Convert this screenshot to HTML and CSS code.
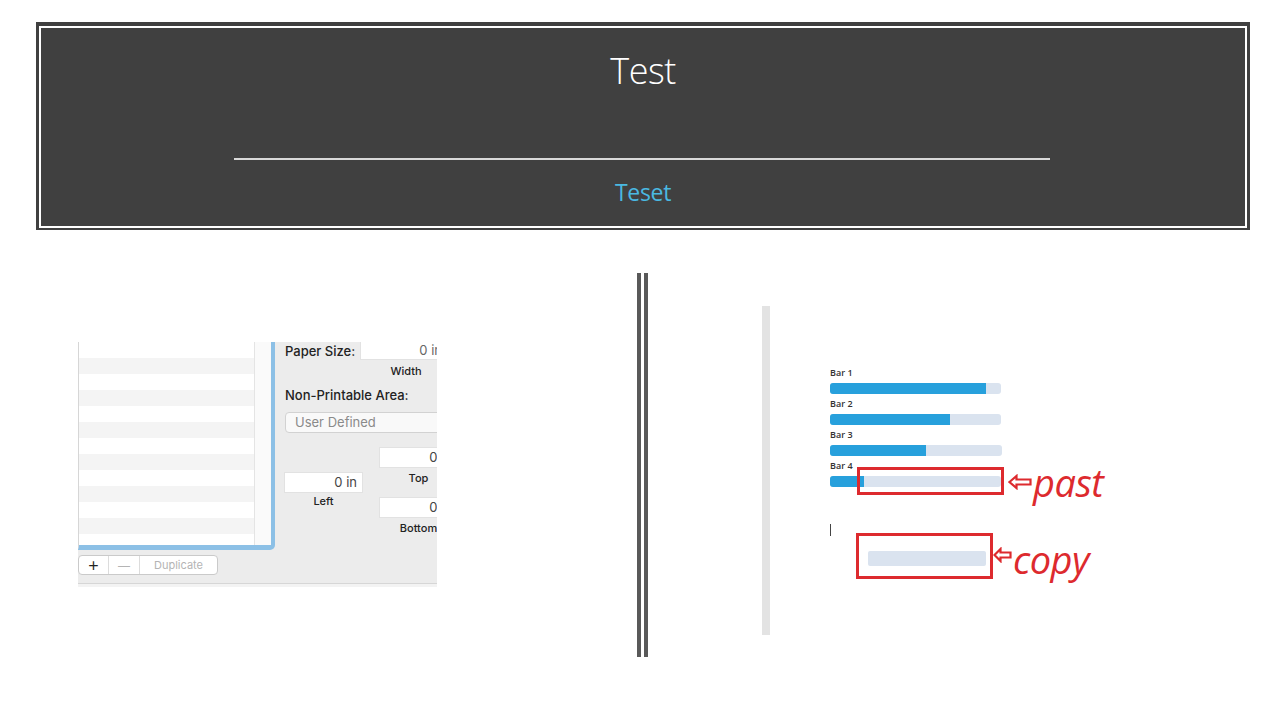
FILE: index.html
```html
<!DOCTYPE html>
<html>
<head>
<meta charset="utf-8">
<link rel="stylesheet" href="styles.css">
</head>
<body>
<header class="banner">
  <div class="frame">
    <h1 class="title">Test</h1>
    <div class="rule"></div>
    <div class="subtitle">Teset</div>
  </div>
</header>

<main class="content">
  <section class="mac">
    <div class="mac-top">
      <div class="list">
        <div class="rows"></div>
        <div class="scroll"></div>
      </div>
      <div class="form">
        <div class="paper">
          <span class="lbl paper-lbl">Paper Size:</span>
          <div class="fieldcol">
            <div class="field paper-field">0 in</div>
            <span class="cap cap-width">Width</span>
          </div>
        </div>
        <div class="lbl npa">Non-Printable Area:</div>
        <div class="popup">User Defined</div>
        <div class="margins">
          <div class="mcol mcol-left">
            <div class="field">0 in</div>
            <span class="cap">Left</span>
          </div>
          <div class="mcol">
            <div class="field">0 in</div>
            <span class="cap">Top</span>
            <div class="field field-bottom">0 in</div>
            <span class="cap">Bottom</span>
          </div>
        </div>
      </div>
    </div>
    <div class="mac-bottom">
      <div class="seg">
        <span class="seg-btn seg-plus">+</span>
        <span class="seg-btn seg-minus">—</span>
        <span class="seg-btn seg-dup">Duplicate</span>
      </div>
    </div>
  </section>

  <div class="divider"><span></span><span></span></div>

  <section class="right">
    <div class="rail"></div>
    <div class="canvas">
      <div class="barrow">
        <div class="bar-label">Bar 1</div>
        <div class="track"><div class="fill" style="width:91%"></div></div>
      </div>
      <div class="barrow">
        <div class="bar-label">Bar 2</div>
        <div class="track"><div class="fill" style="width:70%"></div></div>
      </div>
      <div class="barrow">
        <div class="bar-label">Bar 3</div>
        <div class="track track-wide"><div class="fill" style="width:56%"></div></div>
      </div>
      <div class="barrow">
        <div class="bar-label">Bar 4</div>
        <div class="track"><div class="fill" style="width:20%"></div></div>
      </div>
      <div class="copyrow">
        <div class="cursor"></div>
        <div class="copybox"><div class="ghost"></div></div>
        <svg class="arrow" width="19" height="16" viewBox="0 0 19 16"><path d="M1.5 8 L7.5 2 L7.5 5.5 L17.5 5.5 L17.5 10.5 L7.5 10.5 L7.5 14 Z" fill="#fff" stroke="#dd2a2e" stroke-width="2.2" stroke-linejoin="miter"/></svg>
        <span class="note">copy</span>
      </div>
    </div>
    <div class="past">
      <div class="pastbox"></div>
      <svg class="arrow" width="24" height="16" viewBox="0 0 24 16"><path d="M1.5 8 L8.5 2 L8.5 5.5 L22.5 5.5 L22.5 10.5 L8.5 10.5 L8.5 14 Z" fill="#fff" stroke="#dd2a2e" stroke-width="2.2" stroke-linejoin="miter"/></svg>
      <span class="note">past</span>
    </div>
  </section>
</main>
</body>
</html>
```

FILE: styles.css
```css
* { box-sizing: border-box; }

body {
  margin: 0;
  background: #ffffff;
  font-family: "Open Sans", "Liberation Sans", sans-serif;
}

/* ---------- banner ---------- */
.banner {
  margin: 22px 0 0 36px;
  width: 1214px;
  height: 208px;
  background: #404040;
  padding: 4px 3px 2px 3px;
}

.frame {
  height: 100%;
  border: 2px solid #ffffff;
  display: flex;
  flex-direction: column;
  align-items: center;
}

.title {
  margin: 20px 0 0 0;
  font-family: "Open Sans", sans-serif;
  font-weight: 300;
  font-size: 36px;
  line-height: 46px;
  color: #ffffff;
  letter-spacing: -0.5px;
}

.rule {
  width: 816px;
  height: 2px;
  background: #d9d9d9;
  margin-top: 64px;
  margin-left: -2px;
}

.subtitle {
  margin-top: 17px;
  font-family: "Open Sans", sans-serif;
  font-size: 23px;
  line-height: 30px;
  color: #4ab9e2;
  letter-spacing: -0.3px;
}

/* ---------- content row ---------- */
.content {
  display: flex;
  align-items: flex-start;
  margin-top: 43px;
}

/* ---------- mac dialog crop ---------- */
.mac {
  margin: 69px 0 0 78px;
  width: 359px;
  height: 245px;
  flex-shrink: 0;
  background: #f3f3f3;
  overflow: hidden;
  display: flex;
  flex-direction: column;
  font-family: "Inter", "Liberation Sans", sans-serif;
}

.mac-top {
  display: flex;
  height: 208px;
  background: #ececec;
}

.list {
  width: 197px;
  flex-shrink: 0;
  height: 208px;
  display: flex;
  border-right: 4px solid #8cc0e6;
  border-bottom: 5px solid #8cc0e6;
  border-bottom-right-radius: 5px;
  border-left: 1px solid #d6d6d6;
}

.rows {
  flex: 1;
  background: repeating-linear-gradient(#ffffff 0 16px, #f4f4f4 16px 32px);
}

.scroll {
  width: 17px;
  background: #fafafa;
  border-left: 1px solid #e4e4e4;
}

.form {
  flex: 1;
  min-width: 0;
  padding-left: 10px;
  display: flex;
  flex-direction: column;
  white-space: nowrap;
}

.lbl {
  font-size: 13px;
  font-weight: 500;
  color: #222;
}

.paper {
  display: flex;
  align-items: flex-start;
}

.paper-lbl {
  width: 75px;
  flex-shrink: 0;
  line-height: 18px;
}

.fieldcol {
  display: flex;
  flex-direction: column;
  align-items: center;
  width: 88px;
  flex-shrink: 0;
}

.field {
  width: 79px;
  height: 21px;
  background: #ffffff;
  border: 1px solid #e2e2e2;
  font-size: 13px;
  line-height: 19px;
  color: #444;
  text-align: right;
  padding-right: 5px;
  flex-shrink: 0;
}

.paper-field {
  width: 88px;
  height: 18px;
  line-height: 16px;
  border-top: none;
  color: #666;
}

.cap {
  font-size: 11px;
  font-weight: 500;
  line-height: 16px;
  color: #222;
  margin-top: 2px;
}

.cap-width { margin-top: 3px; margin-left: 4px; }

.npa {
  margin-top: 8px;
  line-height: 16px;
}

.popup {
  margin-top: 9px;
  width: 170px;
  flex-shrink: 0;
  height: 21px;
  border: 1px solid #d2d2d2;
  border-radius: 4px;
  background: #f9f9f9;
  font-size: 13px;
  line-height: 19px;
  color: #8a8a8a;
  padding-left: 9px;
}

.margins {
  margin-top: 14px;
  display: flex;
  gap: 16px;
  margin-left: -1px;
}

.mcol {
  display: flex;
  flex-direction: column;
  align-items: center;
  width: 79px;
  flex-shrink: 0;
}

.mcol-left { margin-top: 25px; }
.mcol-left .cap { margin-top: 0; }

.field-bottom { margin-top: 11px; }

.mac-bottom {
  height: 34px;
  background: #ececec;
  border-bottom: 1px solid #d6d6d6;
  padding-top: 5px;
}

.seg {
  display: flex;
  width: 140px;
  height: 20px;
  background: #ffffff;
  border: 1px solid #cacaca;
  border-radius: 4px;
}

.seg-btn {
  display: flex;
  align-items: center;
  justify-content: center;
  height: 18px;
  border-right: 1px solid #dcdcdc;
  color: #b4b4b4;
}

.seg-plus { width: 30px; font-size: 19px; color: #222; font-weight: 300; line-height: 18px; }
.seg-minus { width: 31px; font-size: 12px; }
.seg-dup { flex: 1; font-size: 11px; border-right: none; }

/* ---------- divider ---------- */
.divider {
  margin: 0 0 0 200px;
  height: 384px;
  display: flex;
  gap: 3px;
  flex-shrink: 0;
}

.divider span {
  width: 4px;
  background: #595959;
}

/* ---------- right panel ---------- */
.right {
  position: relative;
  margin: 33px 0 0 114px;
  height: 329px;
  width: 360px;
  display: flex;
}

.rail {
  width: 8px;
  background: #e3e3e3;
}

.canvas {
  padding: 61px 0 0 60px;
  display: flex;
  flex-direction: column;
}

.barrow {
  margin-bottom: 4px;
}

.bar-label {
  font-size: 9px;
  font-weight: 600;
  line-height: 12px;
  color: #333;
  margin-bottom: 4px;
}

.track {
  width: 171px;
  height: 11px;
  background: #dae3ef;
  border-radius: 3px;
}

.track-wide { width: 172px; }

.fill {
  height: 100%;
  background: #27a0dc;
  border-radius: 3px 0 0 3px;
}

.copyrow {
  margin-top: 33px;
  display: flex;
  align-items: flex-start;
}

.cursor {
  width: 1px;
  height: 12px;
  background: #444;
}

.copybox {
  margin: 9px 0 0 25px;
  width: 137px;
  height: 46px;
  border: 3px solid #dd2a2e;
  padding: 15px 0 0 9px;
}

.ghost {
  width: 118px;
  height: 15px;
  background: #dae3ef;
  border-radius: 2px;
}

.copyrow .arrow {
  margin: 23px 0 0 0;
}

.copyrow .note {
  margin: 13px 0 0 1px;
}

.note {
  font-family: "Open Sans", sans-serif;
  font-style: italic;
  font-size: 38px;
  line-height: 44px;
  color: #dd2a2e;
  letter-spacing: -0.5px;
}

.past {
  position: absolute;
  left: 95px;
  top: 152px;
  display: flex;
  align-items: center;
}

.pastbox {
  width: 147px;
  height: 28px;
  border: 3px solid #dd2a2e;
}

.past .arrow { margin-left: 4px; margin-top: 2px; }
.past .note { margin-left: 1px; margin-top: 2px; }
```
